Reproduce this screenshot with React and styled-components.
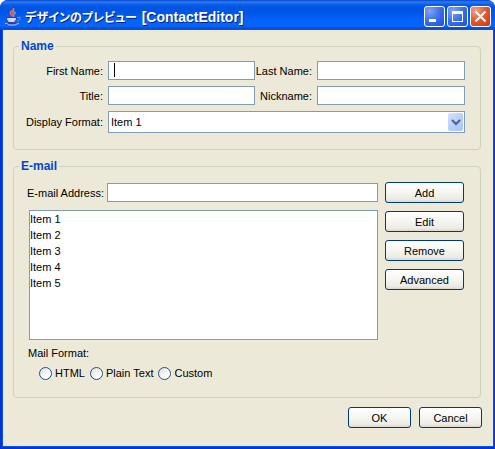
import React from "react";
import styled, { createGlobalStyle, css } from "styled-components";

const ui = '"Liberation Sans", Arial, sans-serif';

const GlobalStyle = createGlobalStyle`
  *, *::before, *::after { box-sizing: border-box; }
  body {
    margin: 0;
    background: #fff;
    color: #000;
    font: 11px/16px ${ui};
  }
  button, input, select { font: inherit; color: inherit; }
`;

const Window = styled.main`
  display: flex;
  flex-direction: column;
  min-height: 100vh;
  border-radius: 8px 8px 0 0;
  overflow: hidden;
  background: #0831d9;
`;

const TitleBar = styled.header`
  display: flex;
  align-items: center;
  gap: 4px;
  height: 30px;
  padding: 3px 4px 0 5px;
  background: linear-gradient(
    #0844c8 0, #2a7cf4 2px, #0f62ec 4px, #0054e3 7px, #0055e6 12px,
    #0462fa 20px, #0466ff 26px, #0452dc 28px, #0140c4 30px
  );
`;

const Title = styled.h1`
  flex: 1;
  margin: 0;
  color: #fff;
  font: bold 12px/20px "Noto Sans CJK JP", sans-serif;
  font-feature-settings: "palt";
  white-space: nowrap;
  text-shadow: 1px 1px 0 #0a1f80;
`;

const FormName = styled.span`
  margin-left: 2px;
  font-family: "Liberation Sans", sans-serif;
  font-size: 14px;
`;

const Controls = styled.div`
  display: flex;
  gap: 2px;
`;

const ControlButton = styled.button`
  width: 21px;
  height: 21px;
  padding: 0;
  border: 1px solid #fff;
  border-radius: 3px;
  background: ${({ $danger }) =>
    $danger
      ? "radial-gradient(circle at 25% 20%, #f0a088, #e0562f 50%, #cc3a12)"
      : "radial-gradient(circle at 25% 20%, #7ea4f8, #3b6eea 50%, #1f50d8)"};

  svg { display: block; }
`;

const Content = styled.div`
  flex: 1;
  margin: 0 2px 3px 3px;
  padding-top: 8px;
  background: #ece9d8;
  box-shadow: 0 0 0 1px #0855dd;
`;

const Group = styled.fieldset`
  min-width: 0;
  margin: 0 12px 8px 10px;
  padding: 0 0 16px;
  border: 1px solid #d0d0bf;
  border-radius: 4px;
`;

const Legend = styled.legend`
  margin-left: 5px;
  padding: 0 2px;
  color: #0046d5;
  font-size: 12px;
  font-weight: bold;
`;

const NameGrid = styled.div`
  display: grid;
  grid-template-columns: 80px 147fr 62px 148fr;
  row-gap: 6px;
  align-items: center;
  padding: 7px 15px 0 14px;
`;

const Label = styled.label`
  justify-self: end;
  padding-right: 5px;
  white-space: nowrap;
`;

const TextField = styled.input`
  width: 100%;
  min-width: 0;
  height: 19px;
  padding: 0 4px;
  border: 1px solid #7f9db9;
  border-radius: 0;
  background: #fff;
  outline: none;
  ${({ $caret }) =>
    $caret &&
    css`
      background: linear-gradient(#000, #000) 5px 1px / 1px 14px no-repeat #fff;
    `}
`;

const ComboBox = styled.div`
  position: relative;
  grid-column: 2 / -1;
`;

const ComboSelect = styled.select`
  display: block;
  width: 100%;
  height: 22px;
  padding: 0 20px 0 2px;
  border: 1px solid #7f9db9;
  border-radius: 0;
  background: #fff;
  appearance: none;
`;

const ComboArrow = styled.span`
  position: absolute;
  top: 2px;
  right: 2px;
  bottom: 2px;
  width: 15px;
  border-radius: 2px;
  background: linear-gradient(135deg, #d6e2fe, #b4cbfb 60%, #aec4f8);
  pointer-events: none;

  svg { display: block; }
`;

const EmailGrid = styled.div`
  display: grid;
  grid-template-columns: 1fr 79px;
  column-gap: 7px;
  padding: 8px 16px 0 14px;
`;

const EmailMain = styled.div`
  min-width: 0;
`;

const AddressRow = styled.div`
  display: grid;
  grid-template-columns: 79px 1fr;
  align-items: center;
  height: 21px;
  margin-bottom: 7px;

  ${Label} { padding-right: 3px; }
`;

const AddressList = styled.select`
  display: block;
  width: calc(100% - 1px);
  height: 130px;
  margin-left: 1px;
  padding: 0;
  border: 1px solid #7f9db9;
  border-radius: 0;
  background: #fff;
  outline: none;
  overflow: hidden;

  option {
    min-height: 16px;
    padding: 2px 0 0;
    line-height: 14px;
  }
`;

const ButtonColumn = styled.div`
  display: flex;
  flex-direction: column;
  gap: 8px;
`;

const PushButton = styled.button`
  min-width: 63px;
  height: 21px;
  padding: 0 4px;
  border: 1px solid #003c74;
  border-radius: 3px;
  background: linear-gradient(#fff, #f5f5f1 50%, #ecebe5 85%, #dcd8cf);
  line-height: 18px;
`;

const FormatSet = styled.div`
  padding: 5px 14px 0;
`;

const RadioRow = styled.div`
  display: flex;
  gap: 5px;
  padding: 4px 0 0 11px;
`;

const RadioLabel = styled.label`
  display: flex;
  align-items: center;
  gap: 3px;
  white-space: nowrap;
`;

const Radio = styled.input`
  width: 13px;
  height: 13px;
  margin: 0;
  border: 1px solid #1d5281;
  border-radius: 50%;
  background: linear-gradient(135deg, #dcdcd7, #fff 70%);
  appearance: none;
`;

const Footer = styled.footer`
  display: flex;
  justify-content: flex-end;
  gap: 8px;
  padding: 1px 11px 18px;
`;

function JavaIcon() {
  return (
    <svg width="16" height="18" viewBox="0 0 16 18" fill="none" aria-hidden="true">
      <path d="M8.500 0v2L5.500 4v2l2 2M9.500 3 7.500 5l1.500 2-1 2" stroke="#e8734f" strokeWidth="1.500" />
      <path d="M10 4v2" stroke="#f7b49c" />
      <path d="M1.500 9.500h10v2l-2 3h-6l-2-3z" fill="#b9bde0" stroke="#3a3c80" />
      <path d="M3 11h7M4 13h5" stroke="#eef0ff" />
      <path d="M12 9.500h3v2l-3 2" stroke="#8a8cc0" />
      <path d="M0 15.500h2l2 1.500h6l3-1.500h1" stroke="#c9b4cc" />
      <path d="M3 15.500h8" stroke="#3a3c80" />
    </svg>
  );
}

function MinimizeIcon() {
  return (
    <svg width="19" height="19" aria-hidden="true">
      <path d="M4 12h7v3H4z" fill="#fff" />
    </svg>
  );
}

function MaximizeIcon() {
  return (
    <svg width="19" height="19" aria-hidden="true">
      <path d="M4 4h11v11H4zM5 7v7h9V7z" fill="#fff" fillRule="evenodd" />
    </svg>
  );
}

function CloseIcon() {
  return (
    <svg width="19" height="19" aria-hidden="true">
      <path d="m4.500 4.500 10 10M14.500 4.500l-10 10" stroke="#fff" strokeWidth="2.200" />
    </svg>
  );
}

const items = ["Item 1", "Item 2", "Item 3", "Item 4", "Item 5"];
const actions = ["Add", "Edit", "Remove", "Advanced"];
const formats = ["HTML", "Plain Text", "Custom"];

export default function App() {
  return (
    <>
      <GlobalStyle />
      <Window>
        <TitleBar>
          <JavaIcon />
          <Title>デザインのプレビュー <FormName>[ContactEditor]</FormName></Title>
          <Controls>
            <ControlButton type="button" aria-label="Minimize"><MinimizeIcon /></ControlButton>
            <ControlButton type="button" aria-label="Maximize"><MaximizeIcon /></ControlButton>
            <ControlButton type="button" aria-label="Close" $danger><CloseIcon /></ControlButton>
          </Controls>
        </TitleBar>
        <Content>
          <Group>
            <Legend>Name</Legend>
            <NameGrid>
              <Label htmlFor="first">First Name:</Label>
              <TextField id="first" $caret />
              <Label htmlFor="last">Last Name:</Label>
              <TextField id="last" />
              <Label htmlFor="title">Title:</Label>
              <TextField id="title" />
              <Label htmlFor="nick">Nickname:</Label>
              <TextField id="nick" />
              <Label htmlFor="display">Display Format:</Label>
              <ComboBox>
                <ComboSelect id="display">
                  {items.slice(0, 4).map((item) => <option key={item}>{item}</option>)}
                </ComboSelect>
                <ComboArrow>
                  <svg width="15" height="18" aria-hidden="true">
                    <path d="m4 7 4 4 4-4" fill="none" stroke="#4d6185" strokeWidth="2" />
                  </svg>
                </ComboArrow>
              </ComboBox>
            </NameGrid>
          </Group>
          <Group>
            <Legend>E-mail</Legend>
            <EmailGrid>
              <EmailMain>
                <AddressRow>
                  <Label htmlFor="address">E-mail Address:</Label>
                  <TextField id="address" />
                </AddressRow>
                <AddressList size={5} aria-label="E-mail addresses">
                  {items.map((item) => <option key={item}>{item}</option>)}
                </AddressList>
              </EmailMain>
              <ButtonColumn>
                {actions.map((name) => <PushButton type="button" key={name}>{name}</PushButton>)}
              </ButtonColumn>
            </EmailGrid>
            <FormatSet role="radiogroup" aria-labelledby="format">
              <div id="format">Mail Format:</div>
              <RadioRow>
                {formats.map((name) => (
                  <RadioLabel key={name}>
                    <Radio type="radio" name="format" />
                    {name}
                  </RadioLabel>
                ))}
              </RadioRow>
            </FormatSet>
          </Group>
          <Footer>
            <PushButton type="button">OK</PushButton>
            <PushButton type="button">Cancel</PushButton>
          </Footer>
        </Content>
      </Window>
    </>
  );
}
